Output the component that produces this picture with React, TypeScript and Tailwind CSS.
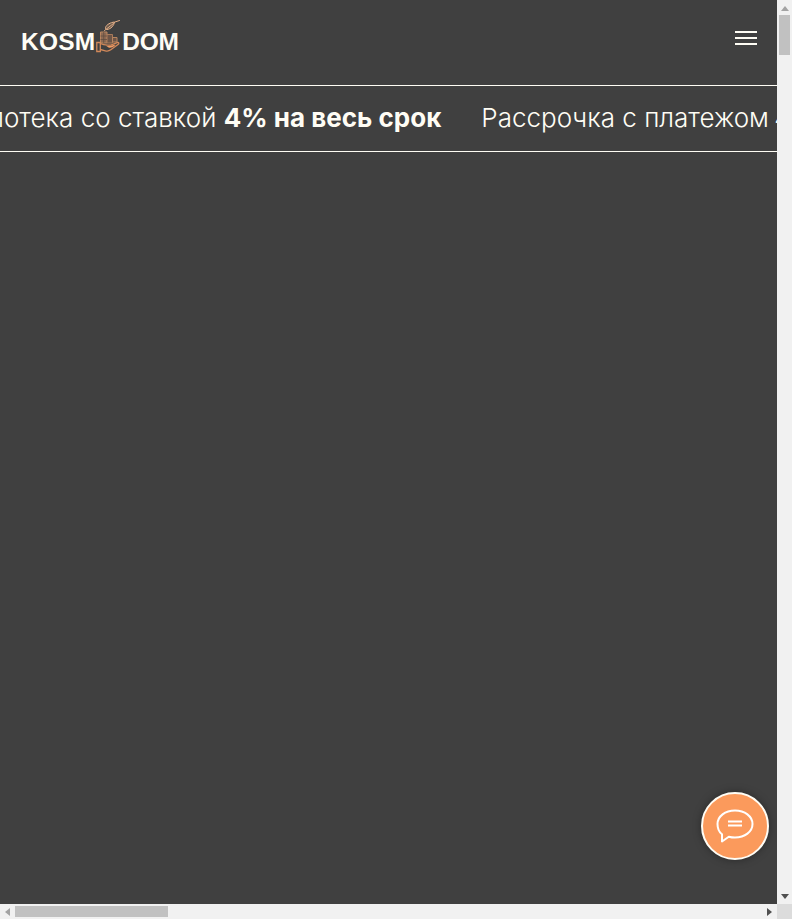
function LogoMark() {
  return (
    <svg width="26" height="33" viewBox="0 0 26 33" fill="none" className="shrink-0">
      {/* feather */}
      <path d="M10.500 7.500c1-3 5-5 9-5.500-.5 3.500-3.500 7-7.500 7.500-1 .1-1.700-.8-1.500-2z" fill="#6b5a4d" stroke="#e9b48d" />
      <path d="M9.500 10.500 18.500 3.500M20 2l4.500-1.500" stroke="#e0ab83" strokeLinecap="round" />
      {/* houses */}
      <path d="M5.500 12H12v11H5.500z" fill="#8d6a53" stroke="#b98660" />
      <path d="M12 14.500h5.500V23H12z" fill="#6d5547" stroke="#a97b5a" />
      <path d="M17.500 17.500H22V22h-4.500z" fill="#6d5547" stroke="#b98660" />
      <path d="M8.700 12v11M5.500 16H12M5.500 19.500H12" stroke="#5b4a3f" strokeWidth=".7" />
      {/* hand */}
      <path
        d="M1.800 22.500h3.500v9H1.800zM5.300 23.500c3 1.500 7 1.800 11 1.300l6.500-2.300c1.200 0 1.300 1 .5 1.800l-7.500 5.500c-1.800 1.300-3.500 1.500-5.500 1l-5-1.300"
        fill="#404040"
        stroke="#d3895a"
        strokeWidth="1.300"
      />
      <path d="M11 25.800c3 .3 6.500-.2 9.500-1.300-1.500 2.300-4 3.500-6.500 3.300z" fill="#f09a63" />
    </svg>
  );
}

function ChatButton() {
  return (
    <button
      type="button"
      className="absolute left-[701px] top-[792px] grid size-[68px] place-items-center rounded-full border-2 border-[#fffdf5] bg-[#fb9a5c] shadow-[0_0_8px_rgba(0,0,0,0.35)]"
    >
      <svg width="38" height="34" viewBox="0 0 38 34" fill="none">
        <path
          d="M19 1.500c9.800 0 17.500 5.800 17.500 13.500S28.800 28.500 19 28.500c-2.200 0-4.300-.3-6.200-.8L6 32.500v-7.200C3 23 1.500 19.300 1.500 15 1.500 7.300 9.200 1.500 19 1.500z"
          stroke="#fff"
          strokeWidth="2"
          strokeLinejoin="round"
        />
        <path d="M12 12.500h14M12 16.500h14" stroke="#fff" strokeWidth="1.800" />
      </svg>
    </button>
  );
}

export default function App() {
  return (
    <div className="relative grid h-[919px] w-[792px] grid-cols-[777px_15px] grid-rows-[904px_15px] overflow-hidden bg-[#f1f1f1]">
      <main className="overflow-hidden bg-[#404040] text-[#fffdf5]">
        <header className="flex h-[86px] items-start justify-between border-b border-[#fffdf5] pl-[21px] pr-[20px]">
          <div className="mt-[18px] flex items-center font-['Liberation_Sans',sans-serif] text-[24.500px] font-bold leading-none">
            <span className="mt-[12px] tracking-[0.2px]">KOSM</span>
            <LogoMark />
            <span className="mt-[12px] ml-[1px] tracking-[-0.3px]">DOM</span>
          </div>
          <button type="button" className="mt-[31px] flex w-[22px] flex-col gap-[4px]">
            <span className="h-[2px] bg-[#fffdf5]" />
            <span className="h-[2px] bg-[#fffdf5]" />
            <span className="h-[2px] bg-[#fffdf5]" />
          </button>
        </header>
        <div className="flex h-[66px] items-center overflow-hidden whitespace-nowrap border-b border-[#fffdf5] pb-[2px] font-['Inter',sans-serif] text-[26px] font-light">
          <div className="-ml-[31px] flex gap-[40px]">
            <span>
              Ипотека со ставкой <b className="font-bold">4% на весь срок</b>
            </span>
            <span>
              Рассрочка с платежом <span className="-ml-[2px]">4 000 ₽</span>
            </span>
          </div>
        </div>
      </main>

      {/* vertical scrollbar */}
      <div className="flex flex-col items-center">
        <div className="mt-[6px] h-0 w-0 border-x-[4px] border-b-[5px] border-x-transparent border-b-[#a3a3a3]" />
        <div className="mt-[4px] h-[40px] w-[11px] bg-[#c1c1c1]" />
        <div className="mt-auto mb-[5px] h-0 w-0 border-x-[4px] border-t-[5px] border-x-transparent border-t-[#505050]" />
      </div>

      {/* horizontal scrollbar */}
      <div className="flex items-center">
        <div className="ml-[5px] h-0 w-0 border-y-[4px] border-r-[5px] border-y-transparent border-r-[#a3a3a3]" />
        <div className="ml-[5px] h-[11px] w-[153px] bg-[#c1c1c1]" />
        <div className="ml-auto mr-[5px] h-0 w-0 border-y-[4px] border-l-[5px] border-y-transparent border-l-[#505050]" />
      </div>
      <div className="bg-[#dcdcdc]" />

      <ChatButton />
    </div>
  );
}
